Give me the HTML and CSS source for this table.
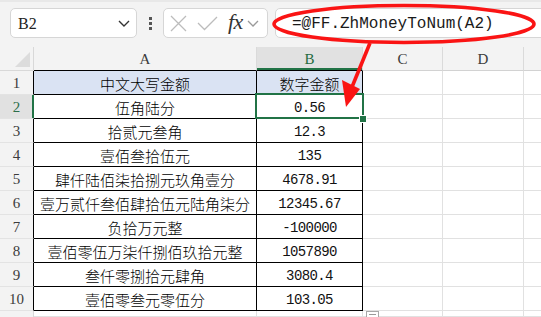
FILE: index.html
```html
<!DOCTYPE html>
<html lang="zh">
<head>
<meta charset="utf-8">
<title>ZhMoneyToNum</title>
<link rel="stylesheet" href="styles.css">
</head>
<body>
<div class="toolbar">
  <div class="namebox">
    <span class="ref">B2</span>
    <svg class="chev" width="12" height="7" viewBox="0 0 12 7"><path d="M1 1 L6 6 L11 1" fill="none" stroke="#333" stroke-width="1.4"/></svg>
  </div>
  <div class="dots"><i></i><i></i><i></i></div>
  <div class="fbtns">
    <svg class="ico" width="17" height="17" viewBox="0 0 17 17"><path d="M1 1 L16 16 M16 1 L1 16" stroke="#bcbcbc" stroke-width="1.3"/></svg>
    <svg class="ico" width="21" height="15" viewBox="0 0 21 15"><path d="M1 7 L7.5 13.5 L20 1" fill="none" stroke="#bcbcbc" stroke-width="1.3"/></svg>
    <span class="fx">fx</span>
    <svg class="chev2" width="12" height="7" viewBox="0 0 12 7"><path d="M1 1 L6 6 L11 1" fill="none" stroke="#9a9a9a" stroke-width="1.3"/></svg>
  </div>
  <div class="fbar"><span class="formula">=@FF.ZhMoneyToNum(A2)</span></div>
</div>

<div class="sheet">
  <div class="corner"><span class="tri"></span></div>
  <div class="ch ch-a">A</div>
  <div class="ch ch-b">B</div>
  <div class="ch">C</div>
  <div class="ch">D</div>
  <div class="ch ch-e"></div>

  <div class="rh">1</div>
  <div class="c t ta hd">中文大写金额</div>
  <div class="c t tb hd">数字金额</div>
  <div class="c"></div><div class="c"></div><div class="c ce"></div>

  <div class="rh rh-sel">2</div>
  <div class="c t ta">伍角陆分</div>
  <div class="c t tb num sel">0.56<span class="selbox"></span><span class="handle"></span></div>
  <div class="c"></div><div class="c"></div><div class="c ce"></div>

  <div class="rh">3</div>
  <div class="c t ta">拾贰元叁角</div>
  <div class="c t tb num">12.3</div>
  <div class="c"></div><div class="c"></div><div class="c ce"></div>

  <div class="rh">4</div>
  <div class="c t ta">壹佰叁拾伍元</div>
  <div class="c t tb num">135</div>
  <div class="c"></div><div class="c"></div><div class="c ce"></div>

  <div class="rh">5</div>
  <div class="c t ta">肆仟陆佰柒拾捌元玖角壹分</div>
  <div class="c t tb num">4678.91</div>
  <div class="c"></div><div class="c"></div><div class="c ce"></div>

  <div class="rh">6</div>
  <div class="c t ta">壹万贰仟叁佰肆拾伍元陆角柒分</div>
  <div class="c t tb num">12345.67</div>
  <div class="c"></div><div class="c"></div><div class="c ce"></div>

  <div class="rh">7</div>
  <div class="c t ta">负拾万元整</div>
  <div class="c t tb num">-100000</div>
  <div class="c"></div><div class="c"></div><div class="c ce"></div>

  <div class="rh">8</div>
  <div class="c t ta">壹佰零伍万柒仟捌佰玖拾元整</div>
  <div class="c t tb num">1057890</div>
  <div class="c"></div><div class="c"></div><div class="c ce"></div>

  <div class="rh">9</div>
  <div class="c t ta">叁仟零捌拾元肆角</div>
  <div class="c t tb num">3080.4</div>
  <div class="c"></div><div class="c"></div><div class="c ce"></div>

  <div class="rh">10</div>
  <div class="c t ta">壹佰零叁元零伍分</div>
  <div class="c t tb num">103.05</div>
  <div class="c"></div><div class="c"></div><div class="c ce"></div>

  <div class="rh rh-last"></div>
  <div class="c"></div>
  <div class="c"></div>
  <div class="c"></div><div class="c"></div><div class="c ce"></div>

  <span class="paste"><i></i></span>
</div>

<svg class="annot" width="541" height="317" viewBox="0 0 541 317">
  <ellipse cx="404" cy="24" rx="130" ry="18.5" fill="none" stroke="#fa1414" stroke-width="3.6"/>
  <path d="M370 43 L352 87" stroke="#fa1414" stroke-width="3.6" fill="none"/>
  <polygon points="342,80 360,89 346,107" fill="#fa1414"/>
</svg>
</body>
</html>
```

FILE: styles.css
```css
* { box-sizing: border-box; }
html, body { margin: 0; padding: 0; }
body {
  width: 541px;
  height: 317px;
  overflow: hidden;
  background: #f3f3f3;
  position: relative;
  font-family: "Noto Sans CJK SC", "Noto Sans", sans-serif;
  color: #111;
}

/* ---------- toolbar ---------- */
.toolbar {
  height: 47px;
  display: flex;
  align-items: flex-start;
  padding: 6px 0 0 10px;
  border-top: 2px solid #e8e8e8;
}
.namebox {
  width: 127px;
  height: 30px;
  background: #fff;
  border: 1px solid #d6d6d6;
  border-radius: 5px;
  display: flex;
  align-items: center;
  justify-content: space-between;
  padding: 0 6px 0 7px;
}
.ref {
  font-family: "Liberation Serif", serif;
  font-size: 16px;
  color: #222;
  padding-top: 1px;
}
.chev { margin-top: 1px; }
.dots {
  width: 26px;
  height: 30px;
  display: flex;
  flex-direction: column;
  align-items: center;
  justify-content: center;
  gap: 2px;
}
.dots i {
  display: block;
  width: 3px;
  height: 3px;
  background: #555;
}
.fbtns {
  width: 105px;
  height: 30px;
  background: #fff;
  border: 1px solid #d6d6d6;
  border-radius: 5px;
  display: flex;
  align-items: center;
  padding-left: 6px;
}
.fbtns .ico:nth-child(1) { margin-right: 10px; }
.fbtns .ico:nth-child(2) { margin-right: 10px; }
.fx {
  font-family: "Liberation Serif", serif;
  font-style: italic;
  font-size: 22px;
  color: #333;
  letter-spacing: -0.5px;
  margin-right: 4px;
  line-height: 1;
  padding-bottom: 3px;
}
.chev2 { margin-top: 1px; }
.fbar {
  flex: 1;
  margin-left: 7px;
  margin-right: -8px;
  height: 30px;
  background: #fff;
  border: 1px solid #d6d6d6;
  border-radius: 5px;
  display: flex;
  align-items: center;
  padding-left: 16px;
}
.formula {
  font-family: "Liberation Mono", monospace;
  font-size: 16px;
  color: #1a1a1a;
  padding-top: 1px;
}

/* ---------- sheet ---------- */
.sheet {
  position: relative;
  display: grid;
  grid-template-columns: 34px 223px 106px 80px 81px 1fr;
  grid-template-rows: 24px repeat(10, 24px) 1fr;
  height: 270px;
  background: #fff;
}
.corner {
  background: #f3f3f3;
  border-right: 1px solid #d8d8d8;
  border-bottom: 1px solid #d8d8d8;
  position: relative;
}
.tri {
  position: absolute;
  right: 3px;
  bottom: 3px;
  width: 0;
  height: 0;
  border-left: 15px solid transparent;
  border-bottom: 15px solid #dcdcdc;
}
.ch {
  background: #f3f3f3;
  border-right: 1px solid #dadada;
  border-bottom: 1px solid #d2d2d2;
  display: flex;
  align-items: center;
  justify-content: center;
  font-family: "Liberation Serif", serif;
  font-size: 15px;
  color: #3c3c3c;
  padding-top: 1px;
}
.ch-a { border-bottom-color: #000; }
.ch-b {
  background: #e1e1e1;
  color: #1f6b40;
  border-bottom: 1px solid #000;
  box-shadow: inset 0 -2px 0 #217346;
}
.ch-e { border-right: none; }

.rh {
  background: #f3f3f3;
  border-right: 1px solid #000;
  border-bottom: 1px solid #e3e3e3;
  display: flex;
  align-items: center;
  justify-content: center;
  font-family: "Liberation Serif", serif;
  font-size: 15px;
  color: #3c3c3c;
  padding-top: 1px;
}
.rh-sel {
  background: #e1e1e1;
  color: #2d6e4a;
  border-right: 1px solid #217346;
  box-shadow: inset -1px 0 0 #217346;
}
.rh-last { border-right-color: #d8d8d8; border-bottom: none; }

.c {
  border-right: 1px solid #e1e1e1;
  border-bottom: 1px solid #e1e1e1;
}
.ce { border-right: none; }
.t {
  display: flex;
  align-items: center;
  justify-content: center;
  font-size: 15px;
  font-weight: 300;
  color: #000;
  padding-top: 2px;
}
.ta, .tb {
  border-right: 1px solid #000;
  border-bottom: 1px solid #000;
}
.hd { background: #dae3f3; }
.num {
  font-family: "Liberation Mono", monospace;
  font-size: 14px;
  font-weight: 400;
  letter-spacing: -0.6px;
  color: #111;
}
.sel { position: relative; }
.selbox {
  position: absolute;
  left: -2px;
  top: -2px;
  right: -2px;
  bottom: -1px;
  border: 2px solid #217346;
}
.handle {
  position: absolute;
  right: -4px;
  bottom: -4px;
  width: 6px;
  height: 6px;
  background: #217346;
  outline: 1px solid #fff;
}
.paste {
  position: absolute;
  left: 366px;
  top: 264px;
  width: 13px;
  height: 10px;
  border: 1px solid #a8a8a8;
  background: #fff;
}
.paste i {
  position: absolute;
  left: 2px;
  top: 2px;
  width: 7px;
  height: 1px;
  background: #9a9a9a;
}

/* ---------- annotation ---------- */
.annot {
  position: absolute;
  left: 0;
  top: 0;
  pointer-events: none;
}
```
